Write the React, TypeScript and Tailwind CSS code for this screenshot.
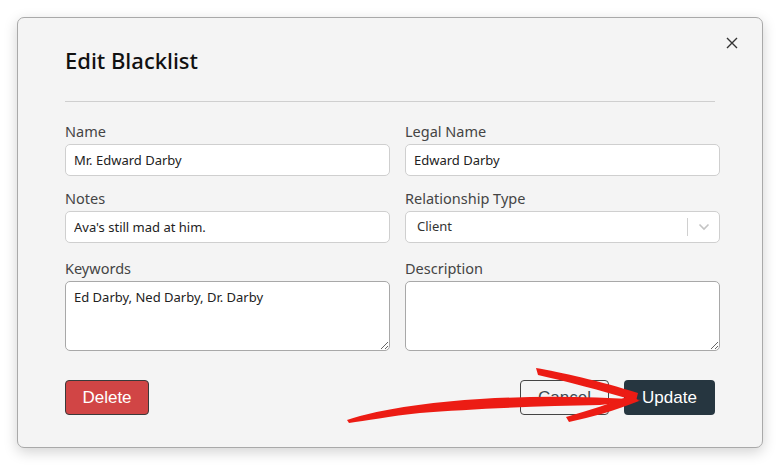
import React from "react";

const font = { fontFamily: '"Noto Sans", "Open Sans", sans-serif' };

function Label({ children }: { children: React.ReactNode }) {
  return <div className="text-[14.5px] leading-[20px] text-[#444] mb-[3px]">{children}</div>;
}

function Input({ value }: { value: string }) {
  return (
    <input
      readOnly
      value={value}
      className="block w-full h-[32px] rounded-[5px] border border-[#cfcfcf] bg-white px-[8px] text-[13px] text-[#222] outline-none"
    />
  );
}

function Area({ value }: { value: string }) {
  return (
    <textarea
      readOnly
      value={value}
      className="block w-full h-[70px] rounded-[5px] border border-[#a8a8a8] bg-white px-[8px] py-[6px] text-[13px] leading-[18px] text-[#222] outline-none resize-y"
    />
  );
}

export default function App() {
  return (
    <div className="relative w-[779px] h-[465px] bg-white" style={font}>
      <div className="absolute left-[17px] top-[17px] w-[746px] h-[431px] rounded-[7px] border border-[#a9a9a9] bg-[#f4f4f4] shadow-[0_4px_14px_rgba(0,0,0,0.18)] px-[47px] pt-[26px]">
        <div className="flex items-start justify-between">
          <h1 className="text-[22px] leading-[32px] font-medium text-[#111]">Edit Blacklist</h1>
          <button className="absolute right-[22px] top-[17px] w-[16px] h-[16px] flex items-center justify-center">
            <svg width="12" height="12" viewBox="0 0 12 12" fill="none" stroke="#333" strokeWidth="1.4">
              <path d="M1 1L11 11M11 1L1 11" />
            </svg>
          </button>
        </div>
        <div className="mt-[25px] h-px bg-[#cfcfcf]" />
        <div className="mt-[19px] mr-[-5px] grid grid-cols-[325px_315px] gap-x-[15px]">
          <div>
            <Label>Name</Label>
            <Input value="Mr. Edward Darby" />
          </div>
          <div>
            <Label>Legal Name</Label>
            <Input value="Edward Darby" />
          </div>
          <div className="mt-[12px]">
            <Label>Notes</Label>
            <Input value="Ava's still mad at him." />
          </div>
          <div className="mt-[12px]">
            <Label>Relationship Type</Label>
            <div className="flex items-center h-[32px] rounded-[5px] border border-[#cfcfcf] bg-white pl-[11px] text-[13px] text-[#333]">
              <span className="flex-1">Client</span>
              <span className="w-px h-[18px] bg-[#d0d0d0]" />
              <span className="w-[31px] flex justify-center">
                <svg width="12" height="8" viewBox="0 0 12 8" fill="none" stroke="#c4c4c4" strokeWidth="1.6">
                  <path d="M1.5 1.5L6 6L10.5 1.5" />
                </svg>
              </span>
            </div>
          </div>
          <div className="mt-[15px]">
            <Label>Keywords</Label>
            <Area value="Ed Darby, Ned Darby, Dr. Darby" />
          </div>
          <div className="mt-[15px]">
            <Label>Description</Label>
            <Area value="" />
          </div>
        </div>
        <div
          className="mt-[29px] flex items-center"
          style={{ fontFamily: '"Liberation Sans", Arial, sans-serif' }}
        >
          <button className="w-[84px] h-[35px] rounded-[4px] border border-[#3a3a3a] bg-[#d14545] text-white text-[17px]">
            Delete
          </button>
          <div className="flex-1" />
          <button className="w-[89px] h-[35px] rounded-[4px] border border-[#444] bg-transparent text-[#3d4a52] text-[17px]">
            Cancel
          </button>
          <button className="ml-[15px] w-[91px] h-[35px] rounded-[4px] bg-[#263640] text-white text-[17px]">
            Update
          </button>
        </div>
      </div>
      <svg className="absolute left-0 top-0 pointer-events-none" width="779" height="465" viewBox="0 0 779 465">
        <g fill="#ec1c14">
          <path d="M347 420 C 380 409, 430 402, 480 399 C 530 396, 585 396, 642 400 L 600 405 C 540 406, 470 409, 420 413 C 390 416, 365 421, 349 423 Z" />
          <path d="M536 368 C 560 372, 600 381, 638 393 L 636 401 C 600 390, 565 381, 538 375 Z" />
          <path d="M632 395 L 639 401 C 614 411, 592 417, 569 422 L 566 417 C 590 410, 612 403, 632 395 Z" />
        </g>
      </svg>
    </div>
  );
}
